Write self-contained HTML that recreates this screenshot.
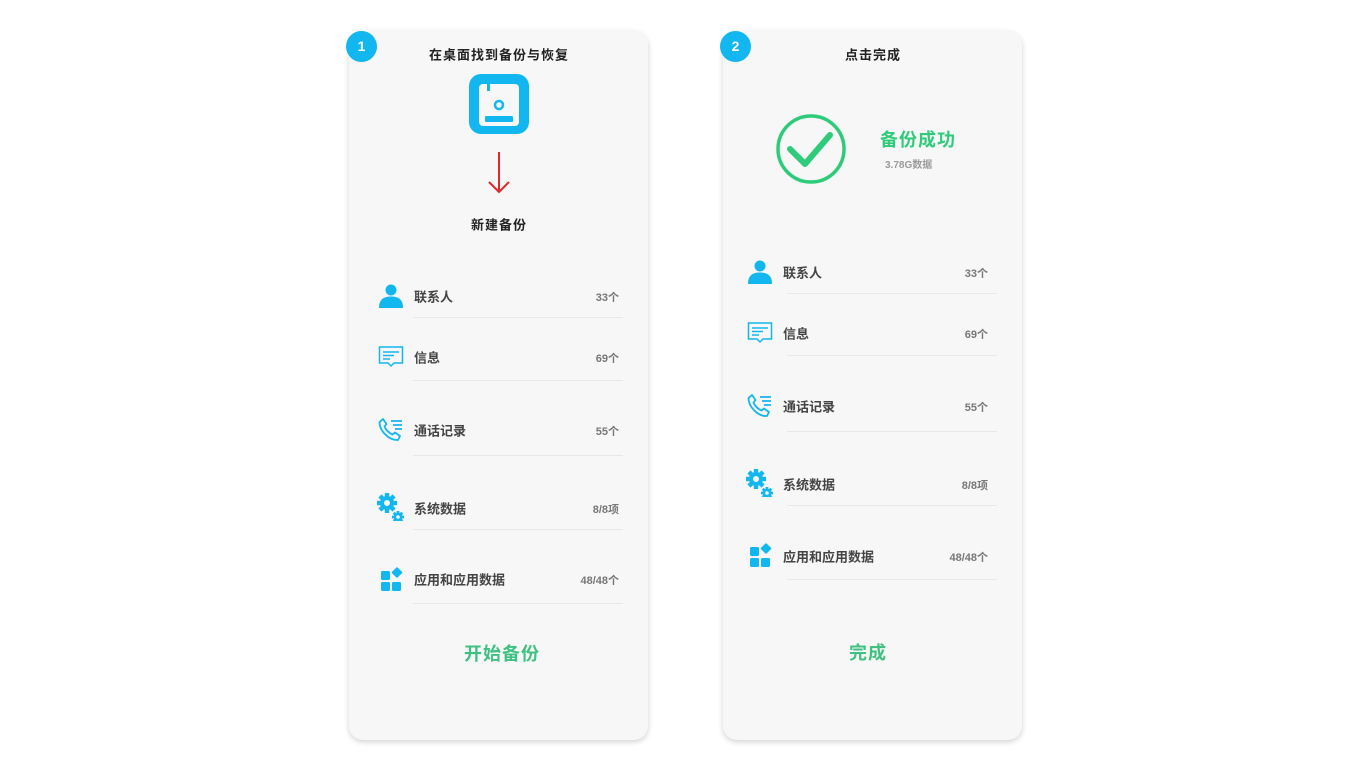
<!DOCTYPE html>
<html><head><meta charset="utf-8"><style>
body{margin:0;width:1368px;height:769px;background:#fff;position:relative;overflow:hidden;font-family:"Liberation Sans","Noto Sans CJK SC",sans-serif;}
.card{position:absolute;top:31px;width:299px;height:709px;background:#f7f7f7;border-radius:14px;box-shadow:0 2px 6px rgba(0,0,0,.18);}
.badge{position:absolute;width:31px;height:31px;border-radius:50%;background:#12b7f0;color:#fff;font-size:14px;font-weight:bold;text-align:center;line-height:31px;}
.t{position:absolute;font-weight:bold;color:#222;font-size:13px;letter-spacing:1px;white-space:nowrap;transform:translate(-50%,-50%);}
.lab{position:absolute;font-weight:bold;color:#444;font-size:13px;transform:translateY(-50%);white-space:nowrap;}
.val{position:absolute;font-weight:bold;color:#777;font-size:11px;transform:translate(-100%,-50%);white-space:nowrap;}
.ln{position:absolute;height:1px;width:210px;background:#e8e8e8;}
.ic{position:absolute;width:28px;height:28px;}
.g{position:absolute;color:#3fc181;font-weight:bold;font-size:18px;letter-spacing:1px;transform:translate(-50%,-50%);white-space:nowrap;}
</style></head><body>
<svg width="0" height="0" style="position:absolute">
<defs>
<g id="person"><circle cx="13" cy="7" r="5.5" fill="#12b7f0"/><path d="M1 25 C1 16 6 13.5 13 13.5 C20 13.5 25 16 25 25 Z" fill="#12b7f0"/></g>
<g id="msg" fill="none" stroke="#12b7f0" stroke-width="1.5"><path d="M1.5 3 H24.5 V19 H16 L13 22 L10 19 H1.5 Z"/><path d="M5 8 H21 M5 11.5 H16 M5 15 H12"/></g>
<g id="phone" fill="none" stroke="#12b7f0" stroke-width="1.8" stroke-linejoin="round"><path d="M6 2 L9.5 7 L7.5 9.5 C9 13 12 16 15.5 17.5 L18 15.5 L23 19 L21 23 C12 23.5 2.5 14 2.5 5 Z"/><path d="M14 4 H25 M16 8 H25 M18 12 H25"/></g>
<g id="gear" fill="#12b7f0"><g transform="translate(10,10)"><circle r="7"/><g><rect x="-2.2" y="-10" width="4.4" height="20"/><rect x="-2.2" y="-10" width="4.4" height="20" transform="rotate(45)"/><rect x="-2.2" y="-10" width="4.4" height="20" transform="rotate(90)"/><rect x="-2.2" y="-10" width="4.4" height="20" transform="rotate(135)"/></g><circle r="3" fill="#f7f7f7"/></g><g transform="translate(21,24)"><circle r="4.2"/><rect x="-1.4" y="-6" width="2.8" height="12"/><rect x="-1.4" y="-6" width="2.8" height="12" transform="rotate(45)"/><rect x="-1.4" y="-6" width="2.8" height="12" transform="rotate(90)"/><rect x="-1.4" y="-6" width="2.8" height="12" transform="rotate(135)"/><circle r="1.8" fill="#f7f7f7"/></g></g>
<g id="apps" fill="#12b7f0"><rect x="2" y="4" width="9" height="9" rx="1.5"/><rect x="2" y="15" width="9" height="9" rx="1.5"/><rect x="13" y="15" width="9" height="9" rx="1.5"/><rect x="14" y="1.5" width="8" height="8" rx="1.2" transform="rotate(45 18 5.5)"/></g>
</defs></svg>

<!-- Card 1 -->
<div class="card" style="left:349px"></div>
<div class="badge" style="left:346px;top:31px">1</div>
<div class="t" style="left:499px;top:54px">在桌面找到备份与恢复</div>
<svg style="position:absolute;left:469px;top:74px" width="60" height="60"><rect width="60" height="60" rx="12" fill="#12b7f0"/><rect x="10" y="10" width="40" height="42" rx="4" fill="#f7f7f7"/><rect x="18" y="10" width="3" height="7" fill="#12b7f0"/><circle cx="30" cy="31" r="4" fill="none" stroke="#12b7f0" stroke-width="2.5"/><rect x="16" y="42" width="28" height="6" rx="1" fill="#12b7f0"/></svg>
<svg style="position:absolute;left:485px;top:150px" width="28" height="46"><path d="M14 2 V42 M4 32 L14 42 L24 32" fill="none" stroke="#e42626" stroke-width="2"/></svg>
<div class="t" style="left:499px;top:224px">新建备份</div>

<svg class="ic" style="left:378px;top:283px"><use href="#person"/></svg>
<div class="lab" style="left:414px;top:296px">联系人</div><div class="val" style="left:619px;top:297px">33个</div><div class="ln" style="left:413px;top:317px"></div>
<svg class="ic" style="left:378px;top:344px"><use href="#msg"/></svg>
<div class="lab" style="left:414px;top:357px">信息</div><div class="val" style="left:619px;top:358px">69个</div><div class="ln" style="left:413px;top:380px"></div>
<svg class="ic" style="left:377px;top:417px"><use href="#phone"/></svg>
<div class="lab" style="left:414px;top:430px">通话记录</div><div class="val" style="left:619px;top:431px">55个</div><div class="ln" style="left:413px;top:455px"></div>
<svg class="ic" style="left:377px;top:493px"><use href="#gear"/></svg>
<div class="lab" style="left:414px;top:508px">系统数据</div><div class="val" style="left:619px;top:509px">8/8项</div><div class="ln" style="left:413px;top:529px"></div>
<svg class="ic" style="left:379px;top:567px"><use href="#apps"/></svg>
<div class="lab" style="left:414px;top:579px">应用和应用数据</div><div class="val" style="left:619px;top:580px">48/48个</div><div class="ln" style="left:413px;top:603px"></div>
<div class="g" style="left:502px;top:653px">开始备份</div>

<!-- Card 2 -->
<div class="card" style="left:723px"></div>
<div class="badge" style="left:720px;top:31px">2</div>
<div class="t" style="left:873px;top:54px">点击完成</div>
<svg style="position:absolute;left:775px;top:113px" width="72" height="72"><circle cx="36" cy="36" r="33" fill="none" stroke="#2ecc7a" stroke-width="3.5"/><path d="M15 36 L30 51 L55 22" fill="none" stroke="#2ecc7a" stroke-width="6" stroke-linecap="round" stroke-linejoin="round"/></svg>
<div style="position:absolute;left:880px;top:126px;color:#2ecc7a;font-weight:bold;font-size:18px;letter-spacing:1px">备份成功</div>
<div style="position:absolute;left:885px;top:156px;color:#999;font-weight:bold;font-size:10px">3.78G数据</div>

<svg class="ic" style="left:747px;top:259px"><use href="#person"/></svg>
<div class="lab" style="left:783px;top:272px">联系人</div><div class="val" style="left:988px;top:273px">33个</div><div class="ln" style="left:787px;top:293px"></div>
<svg class="ic" style="left:747px;top:320px"><use href="#msg"/></svg>
<div class="lab" style="left:783px;top:333px">信息</div><div class="val" style="left:988px;top:334px">69个</div><div class="ln" style="left:787px;top:355px"></div>
<svg class="ic" style="left:746px;top:393px"><use href="#phone"/></svg>
<div class="lab" style="left:783px;top:406px">通话记录</div><div class="val" style="left:988px;top:407px">55个</div><div class="ln" style="left:787px;top:431px"></div>
<svg class="ic" style="left:746px;top:469px"><use href="#gear"/></svg>
<div class="lab" style="left:783px;top:484px">系统数据</div><div class="val" style="left:988px;top:485px">8/8项</div><div class="ln" style="left:787px;top:505px"></div>
<svg class="ic" style="left:748px;top:543px"><use href="#apps"/></svg>
<div class="lab" style="left:783px;top:556px">应用和应用数据</div><div class="val" style="left:988px;top:557px">48/48个</div><div class="ln" style="left:787px;top:579px"></div>
<div class="g" style="left:868px;top:652px">完成</div>
</body></html>
